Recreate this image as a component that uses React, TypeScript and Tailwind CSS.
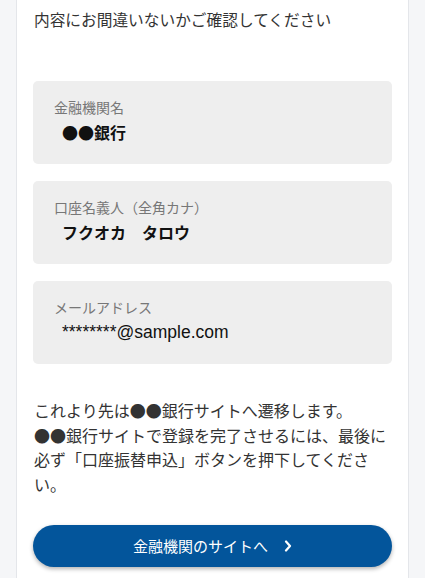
import React from 'react';

const jp = { fontFamily: '"Noto Sans CJK JP", "Liberation Sans", sans-serif' };
const latin = { fontFamily: '"Liberation Sans", "Noto Sans CJK JP", sans-serif' };

function InfoBox({ label, value, email = false }: { label: string; value: string; email?: boolean }) {
  return (
    <div className="bg-[#eeeeee] rounded-[5px] pt-[16px] pb-[20px] pl-[21px] pr-4">
      <p className="text-[14px] leading-[20px] text-[#777777]">{label}</p>
      <p
        className={`mt-[3px] pl-[8px] leading-[24px] text-[#111111] ${
          email ? 'text-[17.5px]' : 'text-[16px] font-bold'
        }`}
        style={email ? latin : undefined}
      >
        {value}
      </p>
    </div>
  );
}

export default function App() {
  return (
    <div className="min-h-screen bg-[#f5f6f8] px-[16px]" style={jp}>
      <div className="bg-white border-x border-[#e4e6ea] px-[16px] pt-[8px] pb-[11px] min-h-[578px]">
        {/* heading */}
        <h1 className="text-[15.7px] leading-[24px] text-[#333333] pl-[1px]">
          内容にお間違いないかご確認してください
        </h1>

        {/* account info */}
        <div className="mt-[49px] flex flex-col gap-[17px]">
          <InfoBox label="金融機関名" value="●●銀行" />
          <InfoBox label="口座名義人（全角カナ）" value="フクオカ　タロウ" />
          <InfoBox label="メールアドレス" value="********@sample.com" email />
        </div>

        {/* notice */}
        <p className="mt-[34px] pl-[1px] text-[16px] leading-[24.5px] text-[#333333]">
          これより先は●●銀行サイトへ遷移します。
          <br />
          ●●銀行サイトで登録を完了させるには、最後に必ず「口座振替申込」ボタンを押下してください。
        </p>

        {/* action */}
        <button className="mt-[29px] w-full h-[42px] rounded-full bg-[#03559b] shadow-[0_2px_4px_rgba(0,0,0,0.3)] flex items-center justify-center gap-[16px] text-white text-[15px]">
          <span>金融機関のサイトへ</span>
          <svg width="8" height="12" viewBox="0 0 8 12" fill="none">
            <polyline points="2,1.5 6,6 2,10.5" stroke="white" strokeWidth="2.2" strokeLinecap="round" strokeLinejoin="round" />
          </svg>
        </button>
      </div>
    </div>
  );
}
